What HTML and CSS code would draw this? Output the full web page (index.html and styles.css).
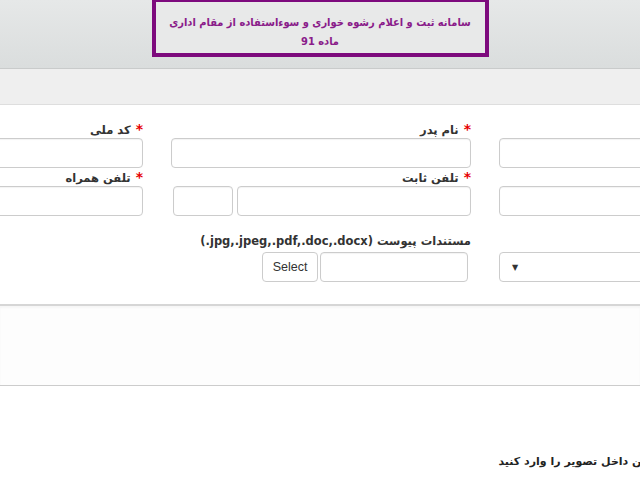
FILE: index.html
```html
<!DOCTYPE html>
<html lang="fa" dir="rtl">
<head>
    <meta charset="UTF-8">
    <meta name="viewport" content="width=device-width, initial-scale=1.0">
    <title>سامانه ثبت و اعلام رشوه خواری</title>
    <link rel="stylesheet" href="styles.css">
</head>
<body>
    <div class="top">
        <div class="title-box">
            سامانه ثبت و اعلام رشوه خواری و سوءاستفاده از مقام اداری
            <br>
            ماده 91
        </div>
    </div>
    <div class="toolbar"></div>

    <div class="form">
        <div class="row">
            <div class="col">
                <label class="field-label">&nbsp;</label>
                <input class="field" type="text">
                <label class="field-label">&nbsp;</label>
                <input class="field" type="text">
            </div>
            <div class="col">
                <label class="field-label"><span class="req">*</span> نام پدر</label>
                <input class="field" type="text">
                <label class="field-label"><span class="req">*</span> تلفن ثابت</label>
                <div class="phone">
                    <input class="field" type="text">
                    <input class="field code" type="text">
                </div>
            </div>
            <div class="col">
                <label class="field-label"><span class="req">*</span> کد ملی</label>
                <input class="field" type="text">
                <label class="field-label"><span class="req">*</span> تلفن همراه</label>
                <input class="field" type="text">
            </div>
        </div>

        <div class="row row-files">
            <div class="col">
                <label class="field-label">&nbsp;</label>
                <div class="select">
                    <span class="arrow">&#9660;</span>
                </div>
            </div>
            <div class="col">
                <label class="field-label">مستندات پیوست <bdi dir="ltr">(.jpg,.jpeg,.pdf,.doc,.docx)</bdi></label>
                <div class="file-group">
                    <input class="field file-name" type="text">
                    <button class="file-button" type="button">Select</button>
                </div>
            </div>
            <div class="col"></div>
        </div>
    </div>

    <div class="panel"></div>

    <div class="captcha">
        <div class="captcha-label">لطفا متن داخل تصویر را وارد کنید</div>
    </div>
</body>
</html>
```

FILE: styles.css
```css
body {
    margin: 0;
    font-family: "DejaVu Sans", sans-serif;
    background-color: white;
    color: #333;
    overflow: hidden;
    height: 480px;
}

.top {
    height: 68px;
    background: linear-gradient(#e6e8e8, #dadddd);
    border-bottom: 1px solid #c9cbcb;
    display: flex;
    justify-content: center;
}

.title-box {
    width: 329px;
    height: 40px;
    border: 4px solid #7d0a7d;
    border-top-width: 2px;
    background-color: #e8e9e9;
    color: #8a1c8a;
    font-family: "DejaVu Sans Condensed", "DejaVu Sans", sans-serif;
    font-weight: bold;
    font-size: 11px;
    line-height: 19px;
    text-align: center;
    white-space: nowrap;
    padding-top: 11px;
    box-sizing: content-box;
}

.toolbar {
    height: 35px;
    background-color: #efefef;
    border-bottom: 1px solid #dedede;
}

.form {
    display: flex;
    flex-direction: column;
    align-items: center;
    padding-top: 15px;
}

.row {
    display: flex;
    gap: 28px;
    width: 956px;
    flex-shrink: 0;
    margin-left: 2px;
}

.row-files {
    margin-top: 16px;
}

.col {
    width: 300px;
    flex-shrink: 0;
    display: flex;
    flex-direction: column;
}

.field-label {
    display: block;
    height: 18px;
    line-height: 18px;
    font-size: 11.5px;
    font-weight: bold;
    color: #333;
    white-space: nowrap;
}

.row-files .field-label {
    margin-bottom: 2px;
}

.req {
    color: #e60000;
    font-size: 14px;
    margin-left: 1px;
}

.field {
    display: block;
    box-sizing: border-box;
    width: 100%;
    height: 30px;
    margin: 0;
    border: 1px solid #cccccc;
    border-radius: 4px;
    background-color: white;
    box-shadow: inset 0 1px 1px rgba(0, 0, 0, 0.05);
}

.phone {
    display: flex;
    gap: 4px;
}

.phone .field {
    width: 234px;
}

.phone .code {
    width: 60px;
}

.select {
    box-sizing: border-box;
    height: 30px;
    border: 1px solid #cccccc;
    border-radius: 4px;
    background-color: white;
    display: flex;
    align-items: center;
    justify-content: flex-end;
    padding-left: 12px;
}

.arrow {
    font-size: 8px;
    color: #333;
}

.file-group {
    display: flex;
    margin-right: 3px;
}

.file-group .file-name {
    width: 148px;
}

.file-button {
    box-sizing: border-box;
    width: 56px;
    height: 30px;
    margin-right: 2px;
    border: 1px solid #cccccc;
    border-radius: 4px;
    background-color: white;
    font-family: "Liberation Sans", Arial, sans-serif;
    font-size: 12.5px;
    color: #333;
    padding: 0;
}

.panel {
    margin-top: 22px;
    height: 79px;
    border-top: 2px solid #d6d6d6;
    border-bottom: 1px solid #cccccc;
    background-color: #fdfdfd;
    box-shadow: inset 0 2px 2px rgba(0, 0, 0, 0.03);
}

.captcha {
    display: flex;
    justify-content: center;
    padding-top: 69px;
}

.captcha-label {
    width: 956px;
    flex-shrink: 0;
    box-sizing: border-box;
    padding-right: 114px;
    font-size: 11px;
    font-weight: bold;
    color: #222;
    white-space: nowrap;
}
```
